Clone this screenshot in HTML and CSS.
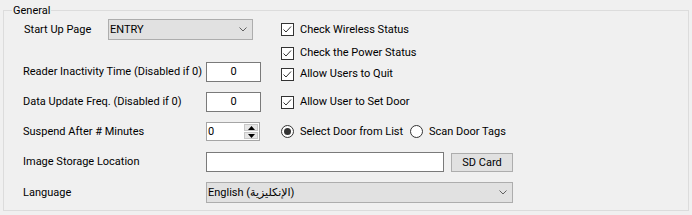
FILE: index.html
```html
<!DOCTYPE html>
<html>
<head>
<meta charset="utf-8">
<link rel="stylesheet" href="styles.css">
</head>
<body>
<div class="group">
  <span class="legend">General</span>
  <div class="rows">
    <div class="row row-a">
      <span class="lbl lbl-start">Start Up Page</span>
      <div class="combo combo-start"><span class="combo-text">ENTRY</span><svg class="chev" width="8" height="5" viewBox="0 0 8 5"><polyline points="0.5,0.5 4,4 7.5,0.5" fill="none" stroke="#606060" stroke-width="1"/></svg></div>
      <div class="check"><svg class="box" width="13" height="13" viewBox="0 0 13 13"><rect x="0.5" y="0.5" width="12" height="12" fill="#fff" stroke="#333"/><polyline points="2.5,6.5 5,9 10,3.5" fill="none" stroke="#333" stroke-width="1"/></svg><span>Check Wireless Status</span></div>
    </div>
    <div class="row row-b">
      <div class="check col3"><svg class="box" width="13" height="13" viewBox="0 0 13 13"><rect x="0.5" y="0.5" width="12" height="12" fill="#fff" stroke="#333"/><polyline points="2.5,6.5 5,9 10,3.5" fill="none" stroke="#333" stroke-width="1"/></svg><span>Check the Power Status</span></div>
    </div>
    <div class="row row-c">
      <span class="lbl">Reader Inactivity Time (Disabled if 0)</span>
      <div class="textbox num">0</div>
      <div class="check low"><svg class="box" width="13" height="13" viewBox="0 0 13 13"><rect x="0.5" y="0.5" width="12" height="12" fill="#fff" stroke="#333"/><polyline points="2.5,6.5 5,9 10,3.5" fill="none" stroke="#333" stroke-width="1"/></svg><span>Allow Users to Quit</span></div>
    </div>
    <div class="row row-d">
      <span class="lbl">Data Update Freq. (Disabled if 0)</span>
      <div class="textbox num">0</div>
      <div class="check"><svg class="box" width="13" height="13" viewBox="0 0 13 13"><rect x="0.5" y="0.5" width="12" height="12" fill="#fff" stroke="#333"/><polyline points="2.5,6.5 5,9 10,3.5" fill="none" stroke="#333" stroke-width="1"/></svg><span>Allow User to Set Door</span></div>
    </div>
    <div class="row row-e">
      <span class="lbl">Suspend After # Minutes</span>
      <div class="spinner">
        <span class="spin-text">0</span>
        <div class="spin-btns">
          <span class="spin-btn"><svg width="7" height="4" viewBox="0 0 7 4"><polygon points="3.5,0 7,4 0,4" fill="#000"/></svg></span>
          <span class="spin-btn"><svg width="7" height="4" viewBox="0 0 7 4"><polygon points="0,0 7,0 3.5,4" fill="#000"/></svg></span>
        </div>
      </div>
      <div class="radios">
        <div class="radio radio-first"><svg width="13" height="13" viewBox="0 0 13 13"><circle cx="6.5" cy="6.5" r="6" fill="#fff" stroke="#333"/><circle cx="6.5" cy="6.5" r="3.5" fill="#333"/></svg><span>Select Door from List</span></div>
        <div class="radio"><svg width="13" height="13" viewBox="0 0 13 13"><circle cx="6.5" cy="6.5" r="6" fill="#fff" stroke="#333"/></svg><span>Scan Door Tags</span></div>
      </div>
    </div>
    <div class="row row-f">
      <span class="lbl">Image Storage Location</span>
      <div class="wide">
        <div class="textbox path"></div>
        <div class="button">SD Card</div>
      </div>
    </div>
    <div class="row row-g">
      <span class="lbl">Language</span>
      <div class="wide">
        <div class="combo combo-lang"><span class="combo-text">English (الإنكليزية)</span><svg class="chev" width="8" height="5" viewBox="0 0 8 5"><polyline points="0.5,0.5 4,4 7.5,0.5" fill="none" stroke="#606060" stroke-width="1"/></svg></div>
      </div>
    </div>
  </div>
</div>
</body>
</html>
```
FILE: styles.css
```css
html, body {
  margin: 0;
  padding: 0;
  background: #f0f0f0;
}
body {
  font-family: Roboto, "DejaVu Sans", sans-serif;
  font-size: 11px;
  color: #000;
  line-height: 14px;
}
.group {
  position: relative;
  box-sizing: border-box;
  margin: 10px 0 0 3px;
  width: 686px;
  height: 201px;
  border: 1px solid #dcdcdc;
}
.legend {
  position: absolute;
  left: 8px;
  top: -7px;
  padding: 0 1px;
  background: #f0f0f0;
}
.rows {
  display: flex;
  flex-direction: column;
  padding: 8px 0 0 19px;
}
.row {
  display: grid;
  grid-template-columns: 183px 75px auto;
  align-items: center;
}
.row-a { height: 21px; grid-template-columns: 85px 173px auto; }
.row-b { height: 14px; margin-top: 6px; }
.row-c { height: 20px; margin-top: 2px; }
.row-d { height: 20px; margin-top: 10px; }
.row-e { height: 19px; margin-top: 10px; }
.row-f { height: 20px; margin-top: 11px; }
.row-g { height: 21px; margin-top: 10px; }
.lbl { white-space: nowrap; }
.lbl-start { padding-left: 1px; }
.col3 { grid-column: 3; }
.low { margin-top: 4px; }
.check, .radio {
  display: flex;
  align-items: center;
  gap: 6px;
  white-space: nowrap;
  flex: none;
}
.check svg, .radio svg { flex: none; display: block; }
.combo {
  box-sizing: border-box;
  height: 21px;
  display: flex;
  align-items: center;
  justify-content: space-between;
  background: #e1e1e1;
  border: 1px solid #adadad;
  padding: 0 5px 0 1px;
  white-space: nowrap;
}
.combo-start { width: 145px; }
.combo-lang { width: 307px; }
.chev { display: block; }
.textbox {
  box-sizing: border-box;
  background: #fff;
  border: 1px solid #7a7a7a;
  height: 20px;
}
.num {
  width: 55px;
  text-align: center;
  line-height: 18px;
}
.spinner {
  box-sizing: border-box;
  width: 54px;
  height: 19px;
  background: #fff;
  border: 1px solid #a5a5a5;
  display: flex;
  justify-content: space-between;
}
.spin-text {
  line-height: 17px;
  padding-left: 1px;
}
.spin-btns {
  display: flex;
  flex-direction: column;
  width: 14px;
  padding: 1px 1px 1px 0;
  gap: 1px;
}
.spin-btn {
  flex: 1;
  box-sizing: border-box;
  background: #e6e6e6;
  border: 1px solid #c8c8c8;
  display: flex;
  align-items: center;
  justify-content: center;
}
.spin-btn svg { display: block; }
.radios {
  display: flex;
  align-items: center;
}
.radio-first { width: 129px; }
.wide {
  grid-column: 2 / 4;
  display: flex;
  align-items: center;
}
.path { width: 238px; }
.button {
  box-sizing: border-box;
  margin-left: 7px;
  width: 62px;
  height: 19px;
  background: #e1e1e1;
  border: 1px solid #adadad;
  text-align: center;
  line-height: 17px;
}
```
